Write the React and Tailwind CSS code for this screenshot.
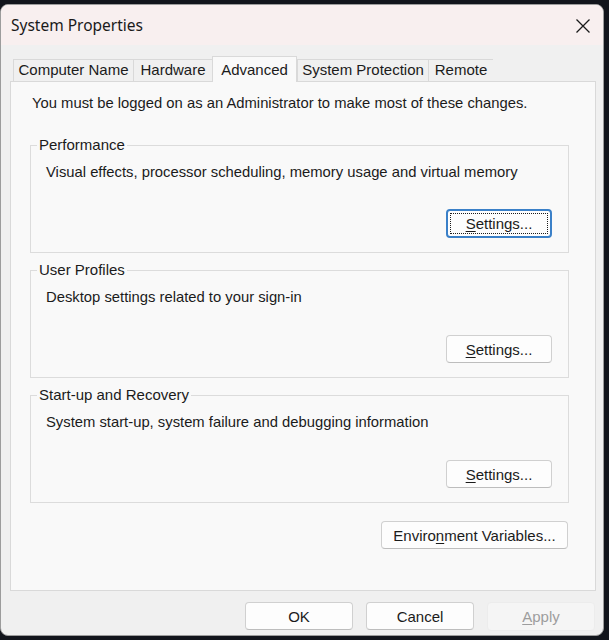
import { useState } from 'react';

const tabs = [
    { label: 'Computer Name', w: 'w-[120px]' },
    { label: 'Hardware', w: 'w-[79px]' },
    { label: 'Advanced', w: 'w-[85px]' },
    { label: 'System Protection', w: 'w-[131px]' },
    { label: 'Remote', w: 'w-[65px]' },
];

const groups = [
    { title: 'Performance', text: 'Visual effects, processor scheduling, memory usage and virtual memory', focused: true },
    { title: 'User Profiles', text: 'Desktop settings related to your sign-in' },
    { title: 'Start-up and Recovery', text: 'System start-up, system failure and debugging information' },
];

function WinButton({ children, focused, disabled, className = '' }) {
    const base = 'flex items-center justify-center rounded-[4px] text-[15px] leading-none';
    if (disabled) {
        return (
            <button disabled className={`${base} ${className} bg-[#f5f5f5] border border-[#ececec] text-[#9d9d9d]`}>
                {children}
            </button>
        );
    }
    if (focused) {
        return (
            <button
                className={`${base} ${className} bg-[#fdfdfd] border-2 border-[#3a80c8] text-[#1b1b1b] outline-1 outline-dotted outline-[#1b1b1b] outline-offset-[-5px]`}
            >
                {children}
            </button>
        );
    }
    return (
        <button className={`${base} ${className} bg-[#fdfdfd] border border-[#d0d0d0] border-b-[#bdbdbd] text-[#1b1b1b]`}>
            {children}
        </button>
    );
}

function GroupBox({ title, text, focused }) {
    return (
        <div className="border border-[#dcdcdc] ml-[19px] w-[539px] h-[108px] pl-[15px] pr-[16px] pb-[14px] flex flex-col">
            <span className="self-start -mt-[10px] ml-[-9px] px-[2px] bg-[#f9f9f9] text-[15px] leading-[18px] text-[#1b1b1b]">
                {title}
            </span>
            <p className="pt-[9px] text-[14.8px] leading-[18px] text-[#1b1b1b]">{text}</p>
            <div className="mt-auto flex justify-end">
                <WinButton focused={focused} className={focused ? 'w-[106px] h-[29px]' : 'w-[106px] h-[28px]'}>
                    <span>
                        <span className="underline underline-offset-2">S</span>ettings...
                    </span>
                </WinButton>
            </div>
        </div>
    );
}

export default function App() {
    const [active] = useState('Advanced');

    return (
        <div
            className="w-[609px] h-[640px] bg-[#12151c] pt-[4px] pr-[5px] overflow-hidden"
            style={{ fontFamily: '"Liberation Sans", Arial, sans-serif' }}
        >
            <div className="h-[632px] rounded-[8px] bg-[#f0f0f0] border border-[#9c9c9c] overflow-hidden flex flex-col">
                {/* title bar */}
                <div className="h-[40px] shrink-0 bg-[#f8efef] flex items-center justify-between pl-[10px] pr-[12px] pt-[2px]">
                    <span className="text-[15.5px] text-[#1a1a1a]" style={{ fontFamily: '"Noto Sans", "Open Sans", sans-serif' }}>
                        System Properties
                    </span>
                    <svg width="16" height="16" viewBox="0 0 16 16" className="text-[#1a1a1a]">
                        <path d="M1.5 1.5 L14.5 14.5 M14.5 1.5 L1.5 14.5" stroke="currentColor" strokeWidth="1.3" fill="none" />
                    </svg>
                </div>

                {/* tabs */}
                <div className="flex items-end pl-[12px] pt-[10px] h-[36px] shrink-0">
                    {tabs.map((t) => {
                        const sel = t.label === active;
                        return (
                            <div
                                key={t.label}
                                className={
                                    sel
                                        ? `${t.w} h-[26px] -mb-px z-10 bg-[#f9f9f9] border border-b-0 border-[#d9d9d9] flex items-start justify-center pt-[2px] text-[15px] text-[#1b1b1b]`
                                        : `${t.w} h-[22px] bg-[#f0f0f0] border border-b-0 border-r-0 border-[#d9d9d9] flex items-center justify-center text-[15px] text-[#1b1b1b]`
                                }
                            >
                                {t.label}
                            </div>
                        );
                    })}
                </div>

                {/* panel */}
                <div className="ml-[9px] w-[586px] h-[510px] shrink-0 bg-[#f9f9f9] border border-[#d9d9d9] flex flex-col">
                    <p className="pl-[21px] pt-[12px] text-[14.8px] leading-[18px] text-[#1b1b1b]">
                        You must be logged on as an Administrator to make most of these changes.
                    </p>
                    <div className="mt-[33px] flex flex-col gap-[17px]">
                        {groups.map((g) => (
                            <GroupBox key={g.title} {...g} />
                        ))}
                    </div>
                    <div className="mt-[18px] ml-[370px]">
                        <WinButton className="w-[187px] h-[28px]">
                            <span>
                                Enviro<span className="underline underline-offset-2">n</span>ment Variables...
                            </span>
                        </WinButton>
                    </div>
                </div>

                {/* bottom buttons */}
                <div className="mt-[11px] flex justify-end gap-[13px] pr-[8px]">
                    <WinButton className="w-[108px] h-[28px]">OK</WinButton>
                    <WinButton className="w-[108px] h-[28px]">Cancel</WinButton>
                    <WinButton disabled className="w-[108px] h-[29px]">
                        <span>
                            <span className="underline underline-offset-2">A</span>pply
                        </span>
                    </WinButton>
                </div>
            </div>
        </div>
    );
}
